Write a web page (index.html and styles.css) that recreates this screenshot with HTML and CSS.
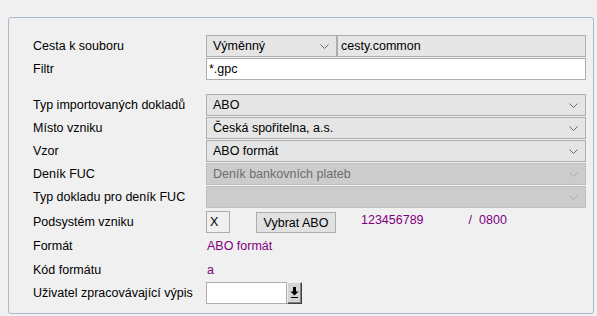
FILE: index.html
```html
<!DOCTYPE html>
<html lang="cs">
<head>
    <meta charset="UTF-8">
    <title>Import výpisu</title>
    <link rel="stylesheet" href="styles.css">
</head>
<body>
    <div class="panel">
        <div class="form">
            <div class="lbl">Cesta k souboru</div>
            <div class="split">
                <div class="combo short">Výměnný
                    <svg class="chev" width="9" height="5" viewBox="0 0 9 5"><polyline points="0.5,0.5 4.5,4.5 8.5,0.5"/></svg>
                </div>
                <div class="box ro">cesty.common</div>
            </div>

            <div class="lbl">Filtr</div>
            <div class="box edit">*.gpc</div>

            <div class="spacer"></div>

            <div class="lbl">Typ importovaných dokladů</div>
            <div class="combo">ABO
                <svg class="chev" width="9" height="5" viewBox="0 0 9 5"><polyline points="0.5,0.5 4.5,4.5 8.5,0.5"/></svg>
            </div>

            <div class="lbl">Místo vzniku</div>
            <div class="combo">Česká spořitelna, a.s.
                <svg class="chev" width="9" height="5" viewBox="0 0 9 5"><polyline points="0.5,0.5 4.5,4.5 8.5,0.5"/></svg>
            </div>

            <div class="lbl">Vzor</div>
            <div class="combo">ABO formát
                <svg class="chev" width="9" height="5" viewBox="0 0 9 5"><polyline points="0.5,0.5 4.5,4.5 8.5,0.5"/></svg>
            </div>

            <div class="lbl">Deník FUC</div>
            <div class="combo disabled">Deník bankovních plateb
                <svg class="chev" width="9" height="5" viewBox="0 0 9 5"><polyline points="0.5,0.5 4.5,4.5 8.5,0.5"/></svg>
            </div>

            <div class="lbl">Typ dokladu pro deník FUC</div>
            <div class="combo disabled">
                <svg class="chev" width="9" height="5" viewBox="0 0 9 5"><polyline points="0.5,0.5 4.5,4.5 8.5,0.5"/></svg>
            </div>

            <div class="lbl">Podsystém vzniku</div>
            <div class="subsys">
                <div class="xbox">X</div>
                <button type="button" class="btn">Vybrat ABO</button>
                <span class="val account">123456789</span>
                <span class="val slash">/</span>
                <span class="val">0800</span>
            </div>

            <div class="lbl">Formát</div>
            <div class="val line">ABO formát</div>

            <div class="lbl">Kód formátu</div>
            <div class="val line">a</div>

            <div class="lbl">Uživatel zpracovávající výpis</div>
            <div class="user">
                <div class="box edit small"></div>
                <div class="pick">
                    <svg width="9" height="12" viewBox="0 0 9 12">
                        <rect x="3" y="0" width="3" height="5" fill="#000"/>
                        <polygon points="0.5,4.5 8.5,4.5 4.5,8.5" fill="#000"/>
                        <rect x="1" y="10" width="7" height="1" fill="#000"/>
                    </svg>
                </div>
            </div>
        </div>
    </div>
</body>
</html>
```

FILE: styles.css
```css
/* Page basics */
body {
    margin: 0;
    background: #f0f0f0;
    font-family: "Liberation Sans", Arial, sans-serif;
    font-size: 12.5px;
    color: #000;
}

/* Group box around the form */
.panel {
    margin: 17px 3px 0 8px;
    border: 1px solid #a9b9cf;
    border-radius: 3px;
    padding: 17px 0 0 24px;
    box-sizing: content-box;
    width: 560px;
    height: 278px;
}

.form {
    display: grid;
    grid-template-columns: 173px 380px;
    grid-template-rows: 22px 22px 12px 22px 22px 22px 22px 22px 25px 22px 23px 22px;
    row-gap: 1px;
}

.lbl {
    display: flex;
    align-items: center;
    white-space: nowrap;
}

.spacer {
    grid-column: 1 / 3;
}

/* Boxes and combos */
.box, .combo {
    box-sizing: border-box;
    height: 22px;
    border: 1px solid #adadad;
    display: flex;
    align-items: center;
    white-space: nowrap;
}

.box {
    padding-left: 2px;
}

.box.ro {
    background: #e6e6e6;
    flex: 1;
    padding-left: 3px;
}

.box.edit {
    background: #fff;
}

.combo {
    background: #e5e5e5;
    padding: 0 6px;
    justify-content: space-between;
}

.combo.short {
    width: 131px;
    flex: none;
}

.combo.disabled {
    background: #cccccc;
    border-color: #bfbfbf;
    color: #6d6d6d;
}

.chev {
    fill: none;
    stroke: #6a6a6a;
    stroke-width: 1;
    margin-left: auto;
    margin-right: 1px;
}

.disabled .chev {
    stroke: #a8a8a8;
}

.split {
    display: flex;
}

/* Podsystém row */
.subsys {
    display: flex;
    align-items: flex-start;
    padding-top: 2px;
}

.xbox {
    box-sizing: border-box;
    width: 24px;
    height: 22px;
    border: 1px solid #adadad;
    display: flex;
    align-items: center;
    padding-left: 3px;
}

.btn {
    box-sizing: border-box;
    margin: 1px 0 0 26px;
    width: 80px;
    height: 21px;
    padding: 0;
    border: 1px solid #adadad;
    background: #e1e1e1;
    font-family: inherit;
    font-size: 12.5px;
    color: #000;
}

.val {
    color: #800080;
    white-space: nowrap;
}

.subsys .val {
    line-height: 18px;
}

.account {
    margin-left: 25px;
}

.slash {
    margin-left: 45px;
    margin-right: 7px;
}

.line {
    display: flex;
    align-items: center;
    padding-left: 1px;
}

/* User picker */
.user {
    display: flex;
}

.box.small {
    width: 81px;
}

.pick {
    box-sizing: border-box;
    width: 15px;
    height: 22px;
    background: #d4d4d4;
    border: 1px solid;
    border-color: #f0f0f0 #404040 #404040 #f0f0f0;
    box-shadow: inset -1px -1px 0 #808080;
    display: flex;
    align-items: center;
    justify-content: center;
}
```
